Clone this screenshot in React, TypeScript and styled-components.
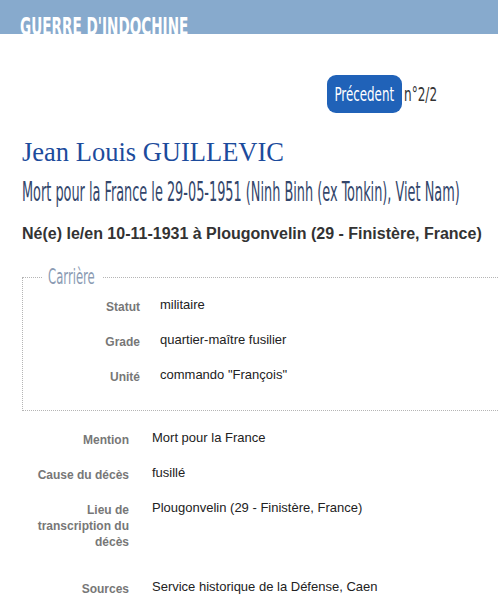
import React from 'react'
import styled, { createGlobalStyle } from 'styled-components'

const Global = createGlobalStyle`
  html, body {
    margin: 0;
    padding: 0;
    background: #fff;
    overflow-x: hidden;
  }
  body {
    font-family: "Liberation Sans", Arial, sans-serif;
    color: #222;
  }
`

const narrow = `"DejaVu Sans Condensed", "DejaVu Sans", sans-serif`

// condensed display lettering (no Oswald offline, so squeeze DejaVu)
const Squeeze = styled.span<{ $x: number; $origin?: string }>`
  display: inline-block;
  white-space: nowrap;
  transform: scaleX(${p => p.$x});
  transform-origin: ${p => p.$origin || 'left'} center;
`

const Header = styled.header`
  height: 34px;
  background: #87aacd;
  padding-left: 20px;
  overflow: hidden;
  box-sizing: border-box;
`
const HeaderTitle = styled.div`
  font-family: ${narrow};
  font-weight: bold;
  font-size: 24px;
  color: #fff;
  line-height: 24px;
  padding-top: 15px;
  text-transform: uppercase;
`

const Page = styled.main`
  padding: 0 0 0 22px;
`

const Nav = styled.div`
  display: flex;
  justify-content: flex-end;
  align-items: center;
  padding-right: 61px;
  margin-top: 41px;
  gap: 2px;
`
const NavButton = styled.button`
  display: flex;
  justify-content: center;
  align-items: center;
  width: 75px;
  height: 38px;
  padding: 0;
  font-family: ${narrow};
  font-size: 20px;
  color: #fff;
  background: #2062b8;
  border: none;
  border-radius: 9px;
  cursor: pointer;
`
const NavCount = styled.span`
  display: inline-block;
  width: 33px;
  font-family: ${narrow};
  font-size: 20px;
  color: #333;
`

const Name = styled.h1`
  font-family: "Liberation Serif", "DejaVu Serif", serif;
  font-weight: normal;
  font-size: 26.5px;
  color: #1c4b9c;
  margin: 22px 0 0;
  line-height: 34px;
`
const Death = styled.h2`
  font-family: ${narrow};
  font-weight: normal;
  font-size: 27px;
  color: #33466b;
  margin: 7px 0 0;
  line-height: 32px;
  overflow-x: clip;
`
const Birth = styled.h3`
  font-family: "Liberation Sans", Arial, sans-serif;
  font-weight: bold;
  font-size: 16px;
  color: #333;
  margin: 16px 0 0;
  line-height: 20px;
`

const Box = styled.fieldset`
  margin: 22px 0 0;
  padding: 0 0 17px;
  border: 1px dotted #b5b5b5;
  border-right: none;
`
const BoxTitle = styled.legend`
  width: 47px;
  margin-left: 19px;
  padding: 0 8px 0 6px;
  font-family: ${narrow};
  font-size: 22px;
  line-height: 22px;
  color: #8b9bb3;
`

const Grid = styled.dl<{ $label: number; $gap: number; $top?: number }>`
  display: grid;
  grid-template-columns: ${p => p.$label}px 1fr;
  column-gap: ${p => p.$gap}px;
  margin: ${p => p.$top || 0}px 0 0;
`
const Term = styled.dt<{ $extra?: number }>`
  font-size: 12px;
  font-weight: bold;
  color: #777;
  text-align: right;
  line-height: 16px;
  padding: 11px 0 ${p => 8 + (p.$extra || 0)}px;
`
const Value = styled.dd`
  margin: 0;
  font-size: 13px;
  color: #222;
  line-height: 16px;
  padding: 9px 0 10px;
`

const career = [
  ['Statut', 'militaire'],
  ['Grade', 'quartier-maître fusilier'],
  ['Unité', 'commando "François"'],
]

const details: [string, string, number?][] = [
  ['Mention', 'Mort pour la France'],
  ['Cause du décès', 'fusillé'],
  ['Lieu de transcription du décès', 'Plougonvelin (29 - Finistère, France)', 12],
  ['Sources', 'Service historique de la Défense, Caen'],
]

export default function App() {
  return (
    <>
      <Global />
      <Header>
        <HeaderTitle>
          <Squeeze $x={0.63}>Guerre d'Indochine</Squeeze>
        </HeaderTitle>
      </Header>
      <Page>
        <Nav>
          <NavButton>
            <Squeeze $x={0.66} $origin="center">Précedent</Squeeze>
          </NavButton>
          <NavCount>
            <Squeeze $x={0.67}>n°2/2</Squeeze>
          </NavCount>
        </Nav>
        <Name>Jean Louis GUILLEVIC</Name>
        <Death>
          <Squeeze $x={0.53}>Mort pour la France le 29-05-1951 (Ninh Binh (ex Tonkin), Viet Nam)</Squeeze>
        </Death>
        <Birth>Né(e) le/en 10-11-1931 à Plougonvelin (29 - Finistère, France)</Birth>
        <Box>
          <BoxTitle>
            <Squeeze $x={0.59}>Carrière</Squeeze>
          </BoxTitle>
          <Grid $label={117} $gap={20}>
            {career.map(([k, v]) => (
              <React.Fragment key={k}>
                <Term>{k}</Term>
                <Value>{v}</Value>
              </React.Fragment>
            ))}
          </Grid>
        </Box>
        <Grid $label={107} $gap={23} $top={10}>
          {details.map(([k, v, extra]) => (
            <React.Fragment key={k}>
              <Term $extra={extra}>{k}</Term>
              <Value>{v}</Value>
            </React.Fragment>
          ))}
        </Grid>
      </Page>
    </>
  )
}
